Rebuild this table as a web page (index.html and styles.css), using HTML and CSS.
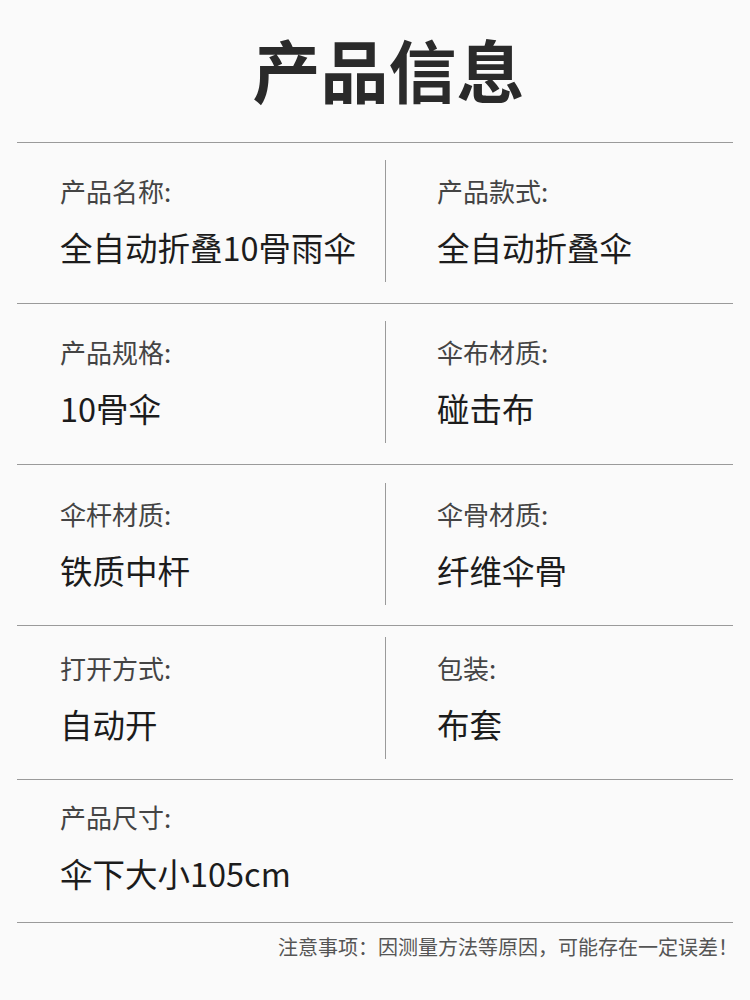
FILE: index.html
```html
<!DOCTYPE html>
<html lang="zh-CN">
<head>
<meta charset="utf-8">
<title>产品信息</title>
<link rel="stylesheet" href="styles.css">
</head>
<body>
<div class="page">
  <header class="title-wrap"><h1 class="title">产品信息</h1></header>
  <section class="table">
    <div class="row">
      <div class="cell cell-left"><div class="label">产品名称:</div><div class="value">全自动折叠10骨雨伞</div></div>
      <div class="cell cell-right"><div class="label">产品款式:</div><div class="value">全自动折叠伞</div></div>
    </div>
    <div class="row">
      <div class="cell cell-left"><div class="label">产品规格:</div><div class="value">10骨伞</div></div>
      <div class="cell cell-right"><div class="label">伞布材质:</div><div class="value">碰击布</div></div>
    </div>
    <div class="row row-3">
      <div class="cell cell-left"><div class="label">伞杆材质:</div><div class="value">铁质中杆</div></div>
      <div class="cell cell-right"><div class="label">伞骨材质:</div><div class="value">纤维伞骨</div></div>
    </div>
    <div class="row row-4">
      <div class="cell cell-left"><div class="label">打开方式:</div><div class="value">自动开</div></div>
      <div class="cell cell-right"><div class="label">包装:</div><div class="value">布套</div></div>
    </div>
    <div class="row row-5">
      <div class="cell cell-left cell-wide"><div class="label">产品尺寸:</div><div class="value">伞下大小105cm</div></div>
    </div>
  </section>
  <p class="note">注意事项：因测量方法等原因，可能存在一定误差！</p>
</div>
</body>
</html>
```

FILE: styles.css
```css
html, body {
  margin: 0;
  padding: 0;
  background: #fafafa;
}
body {
  font-family: "Noto Sans CJK SC", "Noto Sans", sans-serif;
  color: #222;
}
.page {
  width: 750px;
  height: 1000px;
  overflow: hidden;
}
.title-wrap {
  height: 142px;
  display: flex;
  align-items: center;
  justify-content: center;
  padding-left: 27px;
  box-sizing: border-box;
}
.title {
  margin: 0;
  font-size: 68px;
  line-height: 1;
  font-weight: 700;
  color: #2a2a2a;
  padding-bottom: 4px;
}
.table {
  margin: 0 17px;
}
.row {
  display: grid;
  grid-template-columns: 368px 1fr;
  border-top: 1px solid #9a9a9a;
  padding: 17px 0 21px;
}
.row-3 { padding: 18px 0 20px; }
.row-4 { padding: 11px 0 20px; }
.row-5 {
  padding: 6px 0 14px;
  border-bottom: 1px solid #9a9a9a;
}
.cell {
  height: 122px;
  display: flex;
  flex-direction: column;
  justify-content: center;
  gap: 27px;
}
.cell-left { padding-left: 43px; }
.cell-right {
  border-left: 1px solid #9a9a9a;
  padding-left: 51px;
}
.cell-wide { grid-column: 1 / -1; }
.label {
  font-size: 26px;
  line-height: 1;
  color: #444;
}
.value {
  font-size: 32.5px;
  line-height: 1;
  font-weight: 400;
  color: #1c1c1c;
}
.note {
  margin: 0;
  padding: 12px 12px 0 0;
  text-align: right;
  font-size: 20px;
  line-height: 1.2;
  color: #555;
}
```
